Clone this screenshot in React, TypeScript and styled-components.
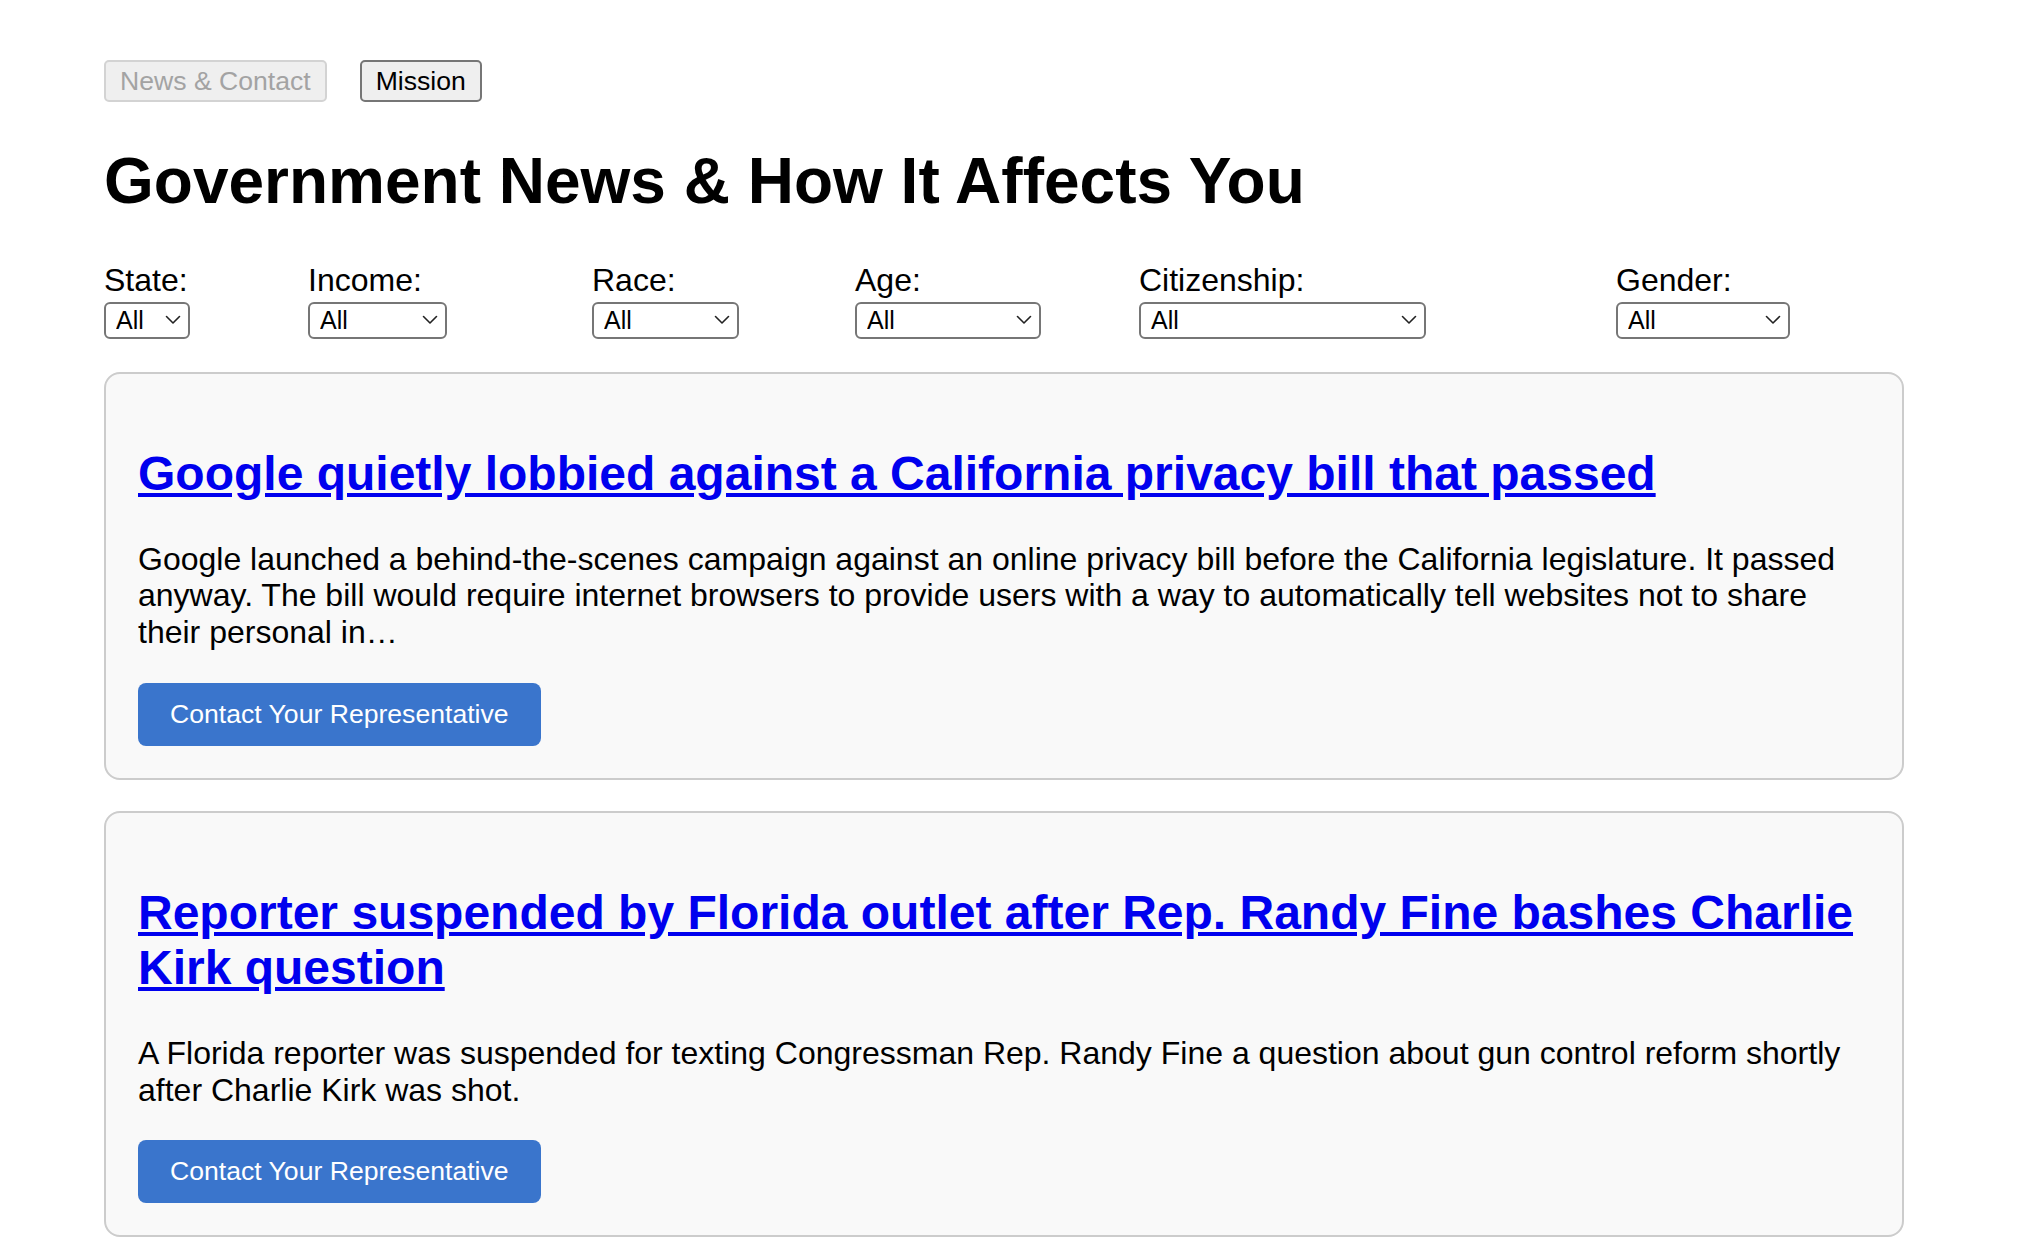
import React from "react";
import styled, { createGlobalStyle } from "styled-components";

const GlobalStyle = createGlobalStyle`
  html, body {
    margin: 0;
    padding: 0;
    background: #ffffff;
  }
  body {
    font-family: "Liberation Sans", Arial, Helvetica, sans-serif;
    color: #000;
  }
`;

const Page = styled.div`
  width: 1800px;
  margin: 0 0 0 104px;
  padding-top: 60px;
`;

const Nav = styled.nav`
  display: flex;
  gap: 33px;
`;

const NavButton = styled.button<{ $disabled?: boolean }>`
  height: 42px;
  padding: 0 14px;
  box-sizing: border-box;
  font-family: "Liberation Sans", Arial, Helvetica, sans-serif;
  font-size: 26.6px;
  line-height: 1;
  border-radius: 5px;
  background: #efefef;
  border: 2px solid ${(p) => (p.$disabled ? "#d3d3d3" : "#767676")};
  color: ${(p) => (p.$disabled ? "#a3a3a3" : "#000")};
  cursor: ${(p) => (p.$disabled ? "default" : "pointer")};
`;

const Title = styled.h1`
  margin: 43px 0 43px;
  font-size: 64px;
  font-weight: 700;
  line-height: 1.149;
`;

const Filters = styled.div`
  display: flex;
  align-items: flex-start;
  margin-top: 4px;
  margin-bottom: 33px;
`;

const FilterGroup = styled.div<{ $width?: number }>`
  display: flex;
  flex-direction: column;
  gap: 3px;
  width: ${(p) => (p.$width ? `${p.$width}px` : "auto")};
  flex: none;
`;

const FilterLabel = styled.label`
  font-size: 32px;
  line-height: 37px;
`;

const SelectWrap = styled.div<{ $width: number }>`
  position: relative;
  width: ${(p) => p.$width}px;
  height: 37px;
`;

const Select = styled.select`
  appearance: none;
  -webkit-appearance: none;
  width: 100%;
  height: 100%;
  box-sizing: border-box;
  border: 2px solid #767676;
  border-radius: 6px;
  background: #fff;
  padding: 0 30px 0 10px;
  font-family: "Liberation Sans", Arial, Helvetica, sans-serif;
  font-size: 25px;
  color: #000;
  outline: none;
`;

const Chevron = styled.svg`
  position: absolute;
  right: 9px;
  top: 50%;
  transform: translateY(-50%);
  pointer-events: none;
`;

const Card = styled.article`
  background: #f9f9f9;
  border: 2px solid #cccccc;
  border-radius: 16px;
  padding: 32px;
  margin-bottom: 31px;
`;

const Headline = styled.h2`
  margin: 40px 0 40px;
  font-size: 48px;
  font-weight: 700;
  line-height: 1.149;
`;

const HeadlineLink = styled.a`
  color: #0000ee;
  text-decoration: underline;
`;

const Summary = styled.p`
  margin: 0 0 32px;
  font-size: 32px;
  line-height: 1.149;
`;

const ContactButton = styled.button`
  display: block;
  background: #3a75cc;
  color: #fff;
  border: none;
  border-radius: 8px;
  padding: 16px 32px;
  font-family: "Liberation Sans", Arial, Helvetica, sans-serif;
  font-size: 26.6px;
  line-height: 1.149;
  cursor: pointer;
`;

const filters = [
  { label: "State:", width: 204, select: 86 },
  { label: "Income:", width: 284, select: 139 },
  { label: "Race:", width: 263, select: 147 },
  { label: "Age:", width: 284, select: 186 },
  { label: "Citizenship:", width: 477, select: 287 },
  { label: "Gender:", width: 0, select: 174 },
];

const articles = [
  {
    title: "Google quietly lobbied against a California privacy bill that passed",
    summary:
      "Google launched a behind-the-scenes campaign against an online privacy bill before the California legislature. It passed anyway. The bill would require internet browsers to provide users with a way to automatically tell websites not to share their personal in…",
  },
  {
    title:
      "Reporter suspended by Florida outlet after Rep. Randy Fine bashes Charlie Kirk question",
    summary:
      "A Florida reporter was suspended for texting Congressman Rep. Randy Fine a question about gun control reform shortly after Charlie Kirk was shot.",
  },
];

export default function App() {
  return (
    <>
      <GlobalStyle />
      <Page>
        <Nav>
          <NavButton $disabled disabled>
            News &amp; Contact
          </NavButton>
          <NavButton>Mission</NavButton>
        </Nav>
        <Title>Government News &amp; How It Affects You</Title>
        <Filters>
          {filters.map((f) => (
            <FilterGroup key={f.label} $width={f.width || undefined}>
              <FilterLabel>{f.label}</FilterLabel>
              <SelectWrap $width={f.select}>
                <Select defaultValue="All">
                  <option>All</option>
                </Select>
                <Chevron width="16" height="10" viewBox="0 0 16 10">
                  <polyline
                    points="1.5,1.5 8,8 14.5,1.5"
                    fill="none"
                    stroke="#222"
                    strokeWidth="1.6"
                    strokeLinecap="round"
                    strokeLinejoin="round"
                  />
                </Chevron>
              </SelectWrap>
            </FilterGroup>
          ))}
        </Filters>
        {articles.map((a) => (
          <Card key={a.title}>
            <Headline>
              <HeadlineLink href="#">{a.title}</HeadlineLink>
            </Headline>
            <Summary>{a.summary}</Summary>
            <ContactButton>Contact Your Representative</ContactButton>
          </Card>
        ))}
      </Page>
    </>
  );
}
